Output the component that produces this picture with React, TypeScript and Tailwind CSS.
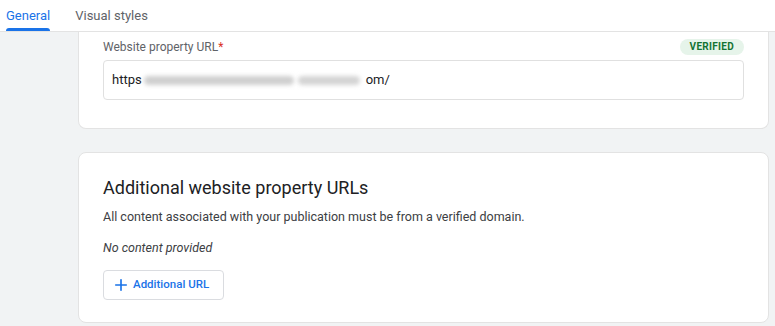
import { Plus } from 'lucide-react';

const App = () => {
  return (
    <div className="w-[775px] h-[326px] overflow-hidden bg-[#f1f3f4] font-['Roboto',sans-serif] text-[#202124]">
      {/* tabs */}
      <div className="h-[32px] bg-white border-b border-[#e3e3e3] flex items-end">
        <div className="ml-[6px] flex flex-col items-center">
          <span className="text-[13px] leading-[20px] text-[#1a73e8] mb-[2px]">General</span>
          <div className="h-[3px] w-[44px] bg-[#1a73e8] rounded-t-[3px]" />
        </div>
        <div className="ml-[25px] mb-[5px] text-[13px] leading-[20px] text-[#5f6368]">Visual styles</div>
      </div>

      <div className="pl-[78px] pr-[6px]">
        {/* card 1 */}
        <div className="bg-white border border-t-0 border-[#e3e3e3] rounded-b-[8px] px-6 pt-[7px] pb-[28px]">
          <div className="h-[16px] flex items-center justify-between mb-[5px]">
            <span className="text-[12px] text-[#5f6368]">
              Website property URL<span className="text-[#d93025]">*</span>
            </span>
            <span className="bg-[#e6f4ea] text-[#137333] text-[10px] font-bold tracking-[0.3px] rounded-full px-[10px] leading-[16px]">
              VERIFIED
            </span>
          </div>
          <div className="h-[40px] border border-[#e0e0e0] rounded-[4px] flex items-center pl-[8px] text-[13px] text-[#202124]">
            <span>https</span>
            <div className="flex items-center gap-[4px] mx-[2px] w-[220px]">
              <div className="h-[9px] w-[150px] bg-[#cfcfcf] rounded-full blur-[2px]" />
              <div className="h-[9px] w-[62px] bg-[#d4d4d4] rounded-full blur-[2px]" />
            </div>
            <span>om/</span>
          </div>
        </div>

        {/* card 2 */}
        <div className="mt-[23px] bg-white border border-[#e3e3e3] rounded-[8px] px-6 pt-[23px] pb-[22px]">
          <h2 className="text-[18px] leading-[24px] text-[#202124]">Additional website property URLs</h2>
          <p className="mt-[7px] text-[12.5px] leading-[20px] text-[#3c4043]">
            All content associated with your publication must be from a verified domain.
          </p>
          <p className="mt-[11px] text-[12.5px] leading-[20px] italic text-[#3c4043]">No content provided</p>
          <button className="mt-[12px] h-[30px] pl-[8px] pr-[14px] border border-[#dadce0] rounded-[4px] flex items-center gap-[3px] text-[11.5px] font-medium text-[#1a73e8]">
            <Plus size={18} strokeWidth={2.2} />
            Additional URL
          </button>
        </div>
      </div>
    </div>
  );
};

export default App;
